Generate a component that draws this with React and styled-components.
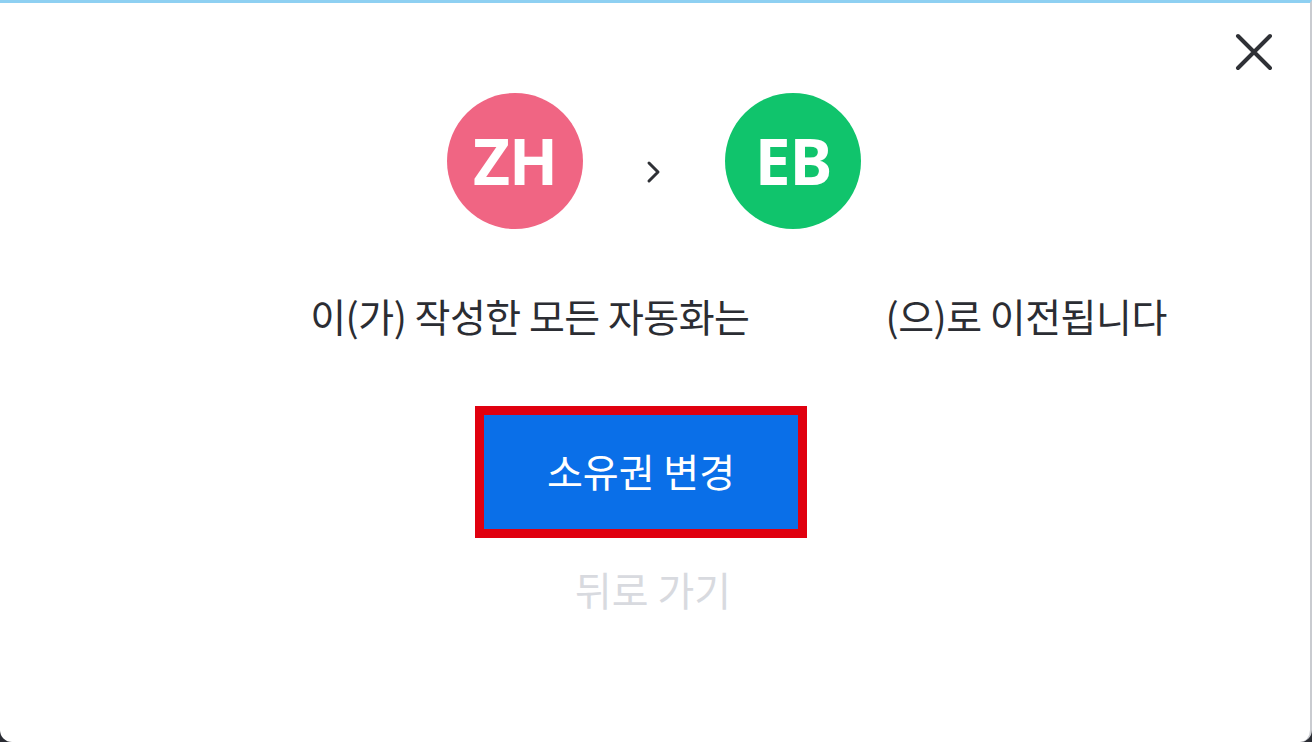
import React from "react";
import styled, { createGlobalStyle } from "styled-components";

const GlobalStyle = createGlobalStyle`
  html, body {
    margin: 0;
    padding: 0;
    background: #2a2c33;
  }
  body {
    font-family: "Noto Sans CJK KR", "Noto Sans", sans-serif;
  }
`;

const Dialog = styled.div`
  box-sizing: border-box;
  width: 1312px;
  height: 742px;
  background: #ffffff;
  border-top: 3px solid #8ed0f2;
  border-right: 2px solid #c9cbd0;
  border-radius: 0 0 12px 12px;
  display: flex;
  flex-direction: column;
  align-items: center;
  padding-top: 90px;
  position: relative;
`;

const CloseButton = styled.button`
  position: absolute;
  top: 29px;
  right: 36px;
  width: 40px;
  height: 40px;
  padding: 0;
  border: none;
  background: transparent;
  display: flex;
  align-items: center;
  justify-content: center;
`;

const Avatars = styled.div`
  display: flex;
  align-items: center;
  margin-right: 2px;
`;

const Avatar = styled.div`
  width: 136px;
  height: 136px;
  border-radius: 50%;
  background: ${({ color }) => color};
  color: #ffffff;
  display: flex;
  align-items: center;
  justify-content: center;
  font-family: "Noto Sans", "Open Sans", sans-serif;
  font-weight: 700;
  font-size: 64px;
  letter-spacing: -1px;
  line-height: 1;
`;

const Chevron = styled.div`
  width: 142px;
  display: flex;
  justify-content: center;
  padding-top: 22px;
`;

const Message = styled.p`
  margin: 59px 11px 0 0;
  display: flex;
  align-items: center;
  font-size: 39px;
  line-height: 1.4;
  color: #2b2d33;
  letter-spacing: -0.5px;
  white-space: nowrap;
`;

const Blank = styled.span`
  display: inline-block;
  width: ${({ w }) => w}px;
`;

const PrimaryFrame = styled.div`
  margin: 63px 28px 0 0;
  border: 9px solid #e0000f;
`;

const PrimaryButton = styled.button`
  display: flex;
  align-items: center;
  justify-content: center;
  width: 314px;
  height: 114px;
  border: none;
  background: #0a6fe8;
  color: #ffffff;
  font-family: "Noto Sans CJK KR", sans-serif;
  font-size: 39px;
  padding: 0 0 4px 0;
`;

const BackLink = styled.button`
  margin: 22px 4px 0 0;
  border: none;
  background: transparent;
  color: #d8dadf;
  font-family: "Noto Sans CJK KR", sans-serif;
  font-size: 40px;
  padding: 0;
`;

export default function App() {
  return (
    <>
      <GlobalStyle />
      <Dialog>
        <CloseButton aria-label="닫기">
          <svg width="38" height="38" viewBox="0 0 38 38">
            <path
              d="M3 3 L35 35 M35 3 L3 35"
              stroke="#2f3136"
              strokeWidth="4"
              strokeLinecap="round"
            />
          </svg>
        </CloseButton>

        <Avatars>
          <Avatar color="#f06583">ZH</Avatar>
          <Chevron>
            <svg width="16" height="24" viewBox="0 0 16 24">
              <path
                d="M3 3 L12 12 L3 21"
                stroke="#2f3136"
                strokeWidth="3"
                fill="none"
                strokeLinecap="round"
                strokeLinejoin="round"
              />
            </svg>
          </Chevron>
          <Avatar color="#10c46c">EB</Avatar>
        </Avatars>

        <Message>
          <Blank w={178} />
          이(가) 작성한 모든 자동화는
          <Blank w={136} />
          (으)로 이전됩니다
        </Message>

        <PrimaryFrame>
          <PrimaryButton>소유권 변경</PrimaryButton>
        </PrimaryFrame>

        <BackLink>뒤로 가기</BackLink>
      </Dialog>
    </>
  );
}
